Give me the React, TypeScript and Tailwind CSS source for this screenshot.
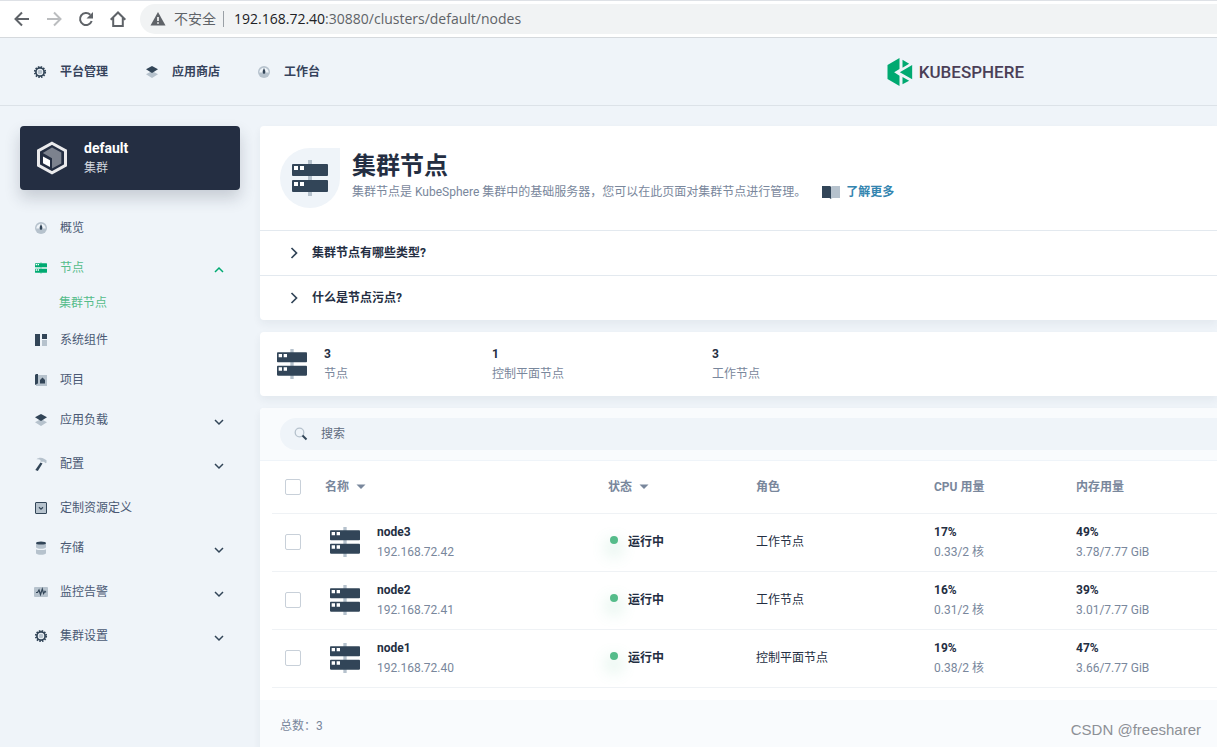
import type { ReactNode } from 'react';

const DARK = '#324558';
const LIGHT = '#b6c2cd';

const ServerIcon = ({ size = 30, dark = DARK, light = LIGHT }: { size?: number; dark?: string; light?: string }) => (
  <svg width={size} height={size} viewBox="0 0 36 36" className="shrink-0">
    <rect x="16" width="4" height="36" fill={light} />
    <rect y="4" width="36" height="12" rx="1" fill={dark} />
    <rect y="20" width="36" height="12" rx="1" fill={dark} />
    <path d="M2 6h4v4H2zM8 6h4v4H8zM2 22h4v4H2zM8 22h4v4H8z" fill="#fff" />
  </svg>
);

const GearIcon = () => (
  <svg width="16" height="16" viewBox="0 0 16 16">
    <circle cx="8" cy="8" r="5.2" fill="none" stroke={DARK} strokeWidth="1.8" strokeDasharray="1.5 1.222" />
    <circle cx="8" cy="8" r="4.1" fill="#eff4f9" stroke={DARK} strokeWidth="1.7" />
    <circle cx="8" cy="8" r="2.3" fill={LIGHT} />
  </svg>
);

const LayersIcon = () => (
  <svg width="16" height="16" viewBox="0 0 16 16">
    <path d="M2 10.3 8 7l6 3.3L8 14z" fill={LIGHT} />
    <path d="M2 5.3 8 2l6 3.3L8 9z" fill={DARK} />
  </svg>
);

const DashboardIcon = () => (
  <svg width="16" height="16" viewBox="0 0 16 16">
    <circle cx="8" cy="8" r="6" fill={LIGHT} />
    <path d="M3.300 8.500a4.700 4.700 0 0 1 9.400 0z" fill="#eff4f9" />
    <path d="M8 4 9.300 7v1.500a1.300 1.300 0 0 1-2.600 0V7z" fill={DARK} />
  </svg>
);

const NodesIcon = () => (
  <span className="flex h-4 w-4 items-center justify-center">
    <ServerIcon size={12} dark="#00aa72" light="#a2dfc6" />
  </span>
);

const ComponentsIcon = () => (
  <svg width="16" height="16" viewBox="0 0 16 16">
    <path d="M2 2h5v12H2zM9 2h5v5H9z" fill={DARK} />
    <path d="M9 8h5v6H9z" fill={LIGHT} />
  </svg>
);

const ProjectIcon = () => (
  <svg width="16" height="16" viewBox="0 0 16 16">
    <path d="M5 3h9v11H3v-2h2z" fill={LIGHT} />
    <path d="M2 3l1-1h2v9.500l-3 1.500z" fill={DARK} />
    <path d="M9.500 5.500 12 8v3.500H7V8z" fill={DARK} />
  </svg>
);

const HammerIcon = () => (
  <svg width="16" height="16" viewBox="0 0 16 16">
    <path d="M3.500 3.300C5.500 1.300 9 1.300 11 2.800l2.500 1.500v2.500l-1 .5-1.500-1.500H7.500V4C6.500 3 5 3 3.500 3.300z" fill={LIGHT} />
    <path d="M7.500 6.500 9.500 7.500 4.800 15 2.300 14z" fill={DARK} />
  </svg>
);

const CrdIcon = () => (
  <svg width="16" height="16" viewBox="0 0 16 16" fill="none" stroke={DARK}>
    <rect x="2.500" y="2.500" width="11" height="11" rx=".5" fill={LIGHT} />
    <path d="M6 7.300l2 1.900 2-1.900" strokeWidth="1.200" />
  </svg>
);

const StorageIcon = () => (
  <svg width="16" height="16" viewBox="0 0 16 16">
    <path d="M3 3h10v4.200c0 .9-2.200 1.500-5 1.500s-5-.6-5-1.500zM3 9.200c1 .6 3 .9 5 .9s4-.3 5-.9v4.100c0 .9-2.200 1.500-5 1.500s-5-.6-5-1.500z" fill={LIGHT} />
    <ellipse cx="8" cy="3" rx="5" ry="1.600" fill={DARK} />
  </svg>
);

const MonitorIcon = () => (
  <svg width="16" height="16" viewBox="0 0 16 16">
    <rect x="1" y="3" width="14" height="10" rx="1" fill={LIGHT} />
    <path d="M3 8.500h1.500L6 6l1.500 4.500L9.300 5l1.300 4.500L12 7.300l1 1" fill="none" stroke={DARK} strokeWidth="1.200" />
  </svg>
);

const BookIcon = () => (
  <svg width="18" height="14" viewBox="0 0 18 14">
    <path d="M0 1h8l1 .8V14l-1.500-1H0z" fill={DARK} />
    <path d="M18 1h-8l-1 .8V14l1.500-1H18z" fill={LIGHT} />
  </svg>
);

const Chevron = ({ up = false }: { up?: boolean }) => (
  <svg width="10" height="8" viewBox="0 0 10 8" fill="none" strokeWidth="1.500" stroke={up ? '#00aa72' : DARK}>
    <path d={up ? 'M1 6l4-4 4 4' : 'M1 2l4 4 4-4'} />
  </svg>
);

const SortArrow = () => (
  <svg width="10" height="6" viewBox="0 0 10 6">
    <path d="M.5.500h9L5 5z" fill="#79879c" />
  </svg>
);

const topLinks = [
  { label: '平台管理', icon: <GearIcon /> },
  { label: '应用商店', icon: <LayersIcon /> },
  { label: '工作台', icon: <DashboardIcon /> },
];

type MenuItem = { label: string; icon: ReactNode; expandable?: boolean; children?: string[] };

const menu: MenuItem[] = [
  { label: '概览', icon: <DashboardIcon /> },
  { label: '节点', icon: <NodesIcon />, expandable: true, children: ['集群节点'] },
  { label: '系统组件', icon: <ComponentsIcon /> },
  { label: '项目', icon: <ProjectIcon /> },
  { label: '应用负载', icon: <LayersIcon />, expandable: true },
  { label: '配置', icon: <HammerIcon />, expandable: true },
  { label: '定制资源定义', icon: <CrdIcon /> },
  { label: '存储', icon: <StorageIcon />, expandable: true },
  { label: '监控告警', icon: <MonitorIcon />, expandable: true },
  { label: '集群设置', icon: <GearIcon />, expandable: true },
];

const questions = ['集群节点有哪些类型?', '什么是节点污点?'];

const nodes = [
  { name: 'node3', ip: '192.168.72.42', role: '工作节点', cpu: '17%', cpuDetail: '0.33/2 核', mem: '49%', memDetail: '3.78/7.77 GiB' },
  { name: 'node2', ip: '192.168.72.41', role: '工作节点', cpu: '16%', cpuDetail: '0.31/2 核', mem: '39%', memDetail: '3.01/7.77 GiB' },
  { name: 'node1', ip: '192.168.72.40', role: '控制平面节点', cpu: '19%', cpuDetail: '0.38/2 核', mem: '47%', memDetail: '3.66/7.77 GiB' },
];

function BrowserBar() {
  return (
    <div className="flex h-[38px] items-center border-t border-b border-t-[#dee1e6] border-b-[#d5d9dd] bg-white pl-3.5">
      <div className="flex items-center gap-4">
        <button aria-label="后退">
          <svg width="16" height="16" viewBox="0 0 16 16" fill="none" stroke="#5f6368" strokeWidth="2">
            <path d="M15 8H2.500M8 1.500 1.500 8 8 14.500" />
          </svg>
        </button>
        <button aria-label="前进">
          <svg width="16" height="16" viewBox="0 0 16 16" fill="none" stroke="#bbbdbf" strokeWidth="2">
            <path d="M1 8h12.500M8 1.500 14.500 8 8 14.500" />
          </svg>
        </button>
        <button aria-label="重新加载">
          <svg width="16" height="16" viewBox="0 0 16 16">
            <path d="M13.700 10A6 6 0 1 1 12.300 3.800" fill="none" stroke="#5f6368" strokeWidth="2" />
            <path d="M15 1v6.500H8.500z" fill="#5f6368" />
          </svg>
        </button>
        <button aria-label="主页">
          <svg width="16" height="16" viewBox="0 0 16 16" fill="none" stroke="#5f6368" strokeWidth="2">
            <path d="M.7 8.800 8 1.500l7.300 7.300M3.200 7v8h9.600V7" />
          </svg>
        </button>
      </div>
      <div className="ml-3.5 flex h-[30px] flex-1 items-center rounded-l-full bg-[#f1f3f4] pl-2.5 text-sm text-[#5f6368]">
        <svg width="16" height="14" viewBox="0 0 16 14">
          <path d="M8 0l7.500 13.500H.5z" fill="#5f6368" />
          <path d="M7.200 5h1.600v4H7.200zM7.200 10.200h1.600v1.600H7.200z" fill="#fff" />
        </svg>
        <span className="ml-2">不安全</span>
        <span className="mr-2.5 ml-[7px] h-4 w-px bg-[#9aa0a6]" />
        <span className="font-['Open_Sans',sans-serif] text-[14px]">
          <span className="text-[#202124]">192.168.72.40</span>:30880/clusters/default/nodes
        </span>
      </div>
    </div>
  );
}

function Logo() {
  return (
    <a href="#" className="flex items-center gap-1.5">
      <svg width="26" height="28" viewBox="0 0 75 84" fill="#00a971">
        <path d="M0 21 36 0v33L20 43l16 10v31L0 63zM45 5l20 12-20 12zM37 43l37-22v43zM45 57l20 11-20 11z" />
      </svg>
      <span className="font-[Roboto,sans-serif] text-[17px] leading-7 font-medium text-[#4a3f57]">KUBESPHERE</span>
    </a>
  );
}

function Header() {
  return (
    <header className="flex h-[68px] items-center justify-between border-b border-[#dce2e8] pr-[193px] pl-8">
      <nav className="flex items-center gap-9">
        {topLinks.map((link) => (
          <a key={link.label} href="#" className="flex items-center gap-3 font-bold text-[#36435c]">
            {link.icon}
            {link.label}
          </a>
        ))}
      </nav>
      <Logo />
    </header>
  );
}

function Sidebar() {
  return (
    <aside className="w-[220px] shrink-0">
      <button className="flex h-16 w-full items-center gap-4 rounded bg-[#242e42] px-4 text-left shadow-[0_8px_16px_0_rgba(36,46,66,0.2)]">
        <svg width="32" height="34" viewBox="0 0 32 34">
          <path d="M16 2.300 29.500 9.600v14.800L16 31.700 2.500 24.400V9.600z" fill="none" stroke="#eaeaec" strokeWidth="3" />
          <path d="M16 6.500l9.300 5v11L16 27.500V17.300L6.800 12z" fill="#7c828e" />
          <path d="M7 15.500l7 3.700V26l-7-3.700z" fill="#fff" />
        </svg>
        <span>
          <span className="block text-sm leading-5 font-bold text-white">default</span>
          <span className="block leading-5 text-[#d3d7de]">集群</span>
        </span>
      </button>
      <ul className="mt-[18px]">
        {menu.map((item) => (
          <li key={item.label}>
            <a
              href="#"
              className={`flex h-10 items-center gap-[11px] pr-4 pl-[13px] ${item.children ? 'text-[#55bc8a]' : 'text-[#4a5974]'} ${item.expandable ? 'mb-1' : ''}`}
            >
              {item.icon}
              <span className="flex-1">{item.label}</span>
              {item.expandable && (
                <span className="pt-1">
                  <Chevron up={!!item.children} />
                </span>
              )}
            </a>
            {item.children?.map((child) => (
              <a key={child} href="#" className="block pb-1.5 pl-[39px] leading-[22px] text-[#55bc8a]">
                {child}
              </a>
            ))}
          </li>
        ))}
      </ul>
    </aside>
  );
}

function Banner() {
  return (
    <section className="rounded-l bg-white shadow-[0_4px_8px_0_rgba(36,46,66,0.06)]">
      <div className="flex h-[104px] items-start gap-3 pt-[22px] pl-5">
        <div className="flex h-[60px] w-[60px] shrink-0 items-center justify-center rounded-full rounded-tr-none bg-[#eff4f9]">
          <ServerIcon size={36} />
        </div>
        <div className="pt-0.5">
          <h1 className="text-2xl leading-8 font-bold text-[#242e42]">集群节点</h1>
          <div className="flex items-center text-[#79879c]">
            <p className="leading-5">集群节点是 KubeSphere 集群中的基础服务器，您可以在此页面对集群节点进行管理。</p>
            <a href="#" className="ml-4 flex items-center gap-1.5 font-bold text-[#3385b0]">
              <BookIcon />
              了解更多
            </a>
          </div>
        </div>
      </div>
      {questions.map((question) => (
        <button key={question} className="flex h-[45px] w-full items-center gap-3.5 border-t border-[#e3e9ef] pl-[30px] text-left font-bold text-[#242e42]">
          <svg width="8" height="12" viewBox="0 0 8 12" fill="none" stroke={DARK} strokeWidth="1.700">
            <path d="M1.500 1l5 5-5 5" />
          </svg>
          {question}
        </button>
      ))}
    </section>
  );
}

function Stat({ value, label }: { value: string; label: string }) {
  return (
    <div className="leading-5">
      <p className="font-bold text-[#242e42]">{value}</p>
      <p className="text-[#79879c]">{label}</p>
    </div>
  );
}

function Stats() {
  return (
    <section className="flex h-16 items-center rounded-l bg-white pl-3 shadow-[0_4px_8px_0_rgba(36,46,66,0.06)]">
      <div className="flex w-[220px] items-center gap-3">
        <span className="flex w-10 justify-center">
          <ServerIcon />
        </span>
        <Stat value="3" label="节点" />
      </div>
      <div className="w-[220px]">
        <Stat value="1" label="控制平面节点" />
      </div>
      <div className="w-[220px]">
        <Stat value="3" label="工作节点" />
      </div>
    </section>
  );
}

const Checkbox = ({ label }: { label: string }) => (
  <input type="checkbox" aria-label={label} className="ml-[13px] block h-4 w-4 appearance-none rounded-xs border border-[#c8d0d9] bg-white" />
);

function NodeTable() {
  return (
    <section className="flex flex-1 flex-col rounded-l bg-white shadow-[0_4px_8px_0_rgba(36,46,66,0.06)]">
      <div className="rounded-tl border-b border-[#eff4f9] bg-[#f9fbfd] py-2.5 pl-5">
        <label className="flex h-8 items-center gap-[13px] rounded-l-full bg-[#eff4f9] pl-3.5">
          <svg width="14" height="14" viewBox="0 0 14 14" fill="none">
            <circle cx="5.500" cy="5.500" r="4.300" stroke={LIGHT} strokeWidth="1.300" />
            <path d="M8.500 8.500l4 4" stroke={DARK} strokeWidth="2" />
          </svg>
          <input type="text" placeholder="搜索" className="flex-1 bg-transparent outline-none placeholder:text-[#5f6b7e]" />
        </label>
      </div>
      <div className="pb-3 pl-3">
        <table className="w-full table-fixed text-left">
          <colgroup>
            <col className="w-[53px]" />
            <col className="w-[283px]" />
            <col className="w-[148px]" />
            <col className="w-[178px]" />
            <col className="w-[142px]" />
            <col />
          </colgroup>
          <thead>
            <tr className="h-13 border-b border-[#eff2f5] text-[#79879c]">
              <th>
                <Checkbox label="全选" />
              </th>
              <th>
                <button className="flex items-center gap-[7px] font-bold">
                  名称 <SortArrow />
                </button>
              </th>
              <th>
                <button className="flex items-center gap-[7px] font-bold">
                  状态 <SortArrow />
                </button>
              </th>
              <th>角色</th>
              <th>CPU 用量</th>
              <th>内存用量</th>
            </tr>
          </thead>
          <tbody>
            {nodes.map((node) => (
              <tr key={node.name} className="h-[58px] border-b border-[#eff2f5] leading-5 text-[#242e42]">
                <td>
                  <Checkbox label={node.name} />
                </td>
                <td>
                  <div className="flex items-center gap-[17px] pl-[5px]">
                    <ServerIcon />
                    <div>
                      <p className="font-bold">{node.name}</p>
                      <p className="text-[#79879c]">{node.ip}</p>
                    </div>
                  </div>
                </td>
                <td>
                  <div className="flex items-center gap-2.5 pl-0.5 font-bold">
                    <span className="mb-1 h-2 w-2 rounded-full bg-[#55bc8a] shadow-[0_8px_16px_4px_rgba(85,188,138,0.2)]" />
                    运行中
                  </div>
                </td>
                <td>{node.role}</td>
                <td>
                  <p className="font-bold">{node.cpu}</p>
                  <p className="text-[#79879c]">{node.cpuDetail}</p>
                </td>
                <td>
                  <p className="font-bold">{node.mem}</p>
                  <p className="text-[#79879c]">{node.memDetail}</p>
                </td>
              </tr>
            ))}
          </tbody>
        </table>
      </div>
      <footer className="flex-1 bg-[#f9fbfd] py-4 pl-5 leading-5 text-[#79879c]">总数：3</footer>
    </section>
  );
}

export default function App() {
  return (
    <div lang="zh-CN" className="relative flex min-h-screen flex-col overflow-hidden bg-[#eff4f9] font-[Roboto,'Noto_Sans_CJK_SC',sans-serif] text-xs">
      <BrowserBar />
      <Header />
      <div className="flex flex-1 gap-5 pt-5 pl-5">
        <Sidebar />
        <main className="flex min-w-0 flex-1 flex-col gap-3">
          <Banner />
          <Stats />
          <NodeTable />
        </main>
      </div>
      <span className="absolute right-4 bottom-2 font-['Liberation_Sans',sans-serif] text-[15px] leading-7 text-[#8d9096]">CSDN @freesharer</span>
    </div>
  );
}
